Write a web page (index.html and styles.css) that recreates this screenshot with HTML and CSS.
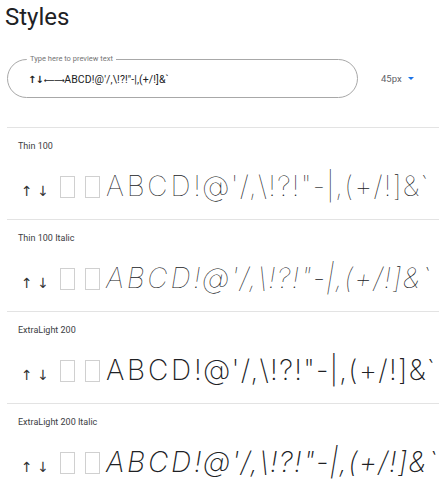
FILE: index.html
```html
<!DOCTYPE html>
<html>
<head>
<meta charset="utf-8">
<link rel="stylesheet" href="styles.css">
</head>
<body>
<h1 class="title">Styles</h1>
<div class="controls">
  <div class="field">
    <span class="field-label">Type here to preview text</span>
    <span class="field-value"><span class="in-arrows">↑↓</span><span class="in-long">⟵⟶</span>ABCD!@'/,\!?!"-|,(+/!]&amp;`</span>
  </div>
  <div class="size">45px <span class="caret"></span></div>
</div>
<div class="list">
  <div class="row">
    <div class="row-label">Thin 100</div>
    <div class="sample w100"><span class="arrows">↑ ↓</span><span class="tofu"></span><span class="tofu"></span><span class="caps">ABCD</span>!@'/,\!?!"-|,(+/!]&amp;`</div>
  </div>
  <div class="row">
    <div class="row-label">Thin 100 Italic</div>
    <div class="sample w100 italic"><span class="arrows">↑ ↓</span><span class="tofu"></span><span class="tofu"></span><span class="caps">ABCD</span>!@'/,\!?!"-|,(+/!]&amp;`</div>
  </div>
  <div class="row">
    <div class="row-label">ExtraLight 200</div>
    <div class="sample w200"><span class="arrows">↑ ↓</span><span class="tofu"></span><span class="tofu"></span><span class="caps">ABCD</span>!@'/,\!?!"-|,(+/!]&amp;`</div>
  </div>
  <div class="row">
    <div class="row-label">ExtraLight 200 Italic</div>
    <div class="sample w200 italic"><span class="arrows">↑ ↓</span><span class="tofu"></span><span class="tofu"></span><span class="caps">ABCD</span>!@'/,\!?!"-|,(+/!]&amp;`</div>
  </div>
</div>
</body>
</html>
```
FILE: styles.css
```css
html, body {
  margin: 0;
  padding: 0;
  background: #fff;
  overflow: hidden;
}
body {
  width: 439px;
  font-family: Roboto, "Open Sans", sans-serif;
  color: #202124;
}
.title {
  margin: 0;
  padding: 2px 0 0 5px;
  font-size: 24px;
  font-weight: 400;
  line-height: 30px;
  color: #202124;
}
.controls {
  display: flex;
  align-items: center;
  margin-top: 27px;
  padding-left: 7px;
}
.field {
  position: relative;
  box-sizing: border-box;
  width: 351px;
  height: 39px;
  border: 1px solid #a8a8a8;
  border-radius: 20px;
  display: flex;
  align-items: center;
  padding-left: 20px;
}
.field-label {
  position: absolute;
  top: -6px;
  left: 19px;
  padding: 0 3px;
  background: #fff;
  font-size: 7.5px;
  line-height: 10px;
  color: #757575;
}
.field-value {
  font-size: 10.5px;
  color: #202124;
  padding-top: 2px;
  letter-spacing: 0.1px;
}
.in-arrows {
  font-family: "DejaVu Sans", sans-serif;
  font-weight: 700;
  font-size: 10px;
  letter-spacing: -1px;
}
.in-long {
  font-family: "DejaVu Sans", sans-serif;
  font-size: 7.5px;
  letter-spacing: -0.5px;
  margin-left: 1px;
}
.size {
  margin-left: 23px;
  font-size: 9.5px;
  color: #5f6368;
  display: flex;
  align-items: center;
  gap: 6px;
}
.caret {
  width: 0;
  height: 0;
  border-left: 3px solid transparent;
  border-right: 3px solid transparent;
  border-top: 3.5px solid #1a73e8;
}
.list {
  margin-top: 29px;
  margin-left: 7px;
}
.row {
  box-sizing: border-box;
  height: 92px;
  border-top: 1px solid #e3e3e3;
  padding-left: 11px;
  padding-top: 12px;
  overflow: hidden;
}
.row-label {
  font-size: 9px;
  line-height: 12px;
  color: #3c4043;
}
.sample {
  margin-top: 17px;
  white-space: nowrap;
  font-family: Inter, "Open Sans", sans-serif;
  font-size: 28px;
  line-height: 34px;
  letter-spacing: 1.3px;
  color: #202124;
}
.caps {
  letter-spacing: 2.8px;
}
.w100 { font-weight: 100; }
.w200 { font-weight: 200; }
.italic { font-style: italic; }
.arrows {
  font-family: "DejaVu Sans", sans-serif;
  font-style: normal;
  font-weight: 400;
  font-size: 14px;
  letter-spacing: 0;
  color: #333;
  margin-left: 3px;
  margin-right: 11px;
}
.tofu {
  display: inline-block;
  box-sizing: border-box;
  width: 15px;
  height: 22px;
  border: 1px solid #d0d0d0;
  margin-right: 10px;
  vertical-align: -2px;
}
.tofu + .caps {
  margin-left: -4px;
}
```
